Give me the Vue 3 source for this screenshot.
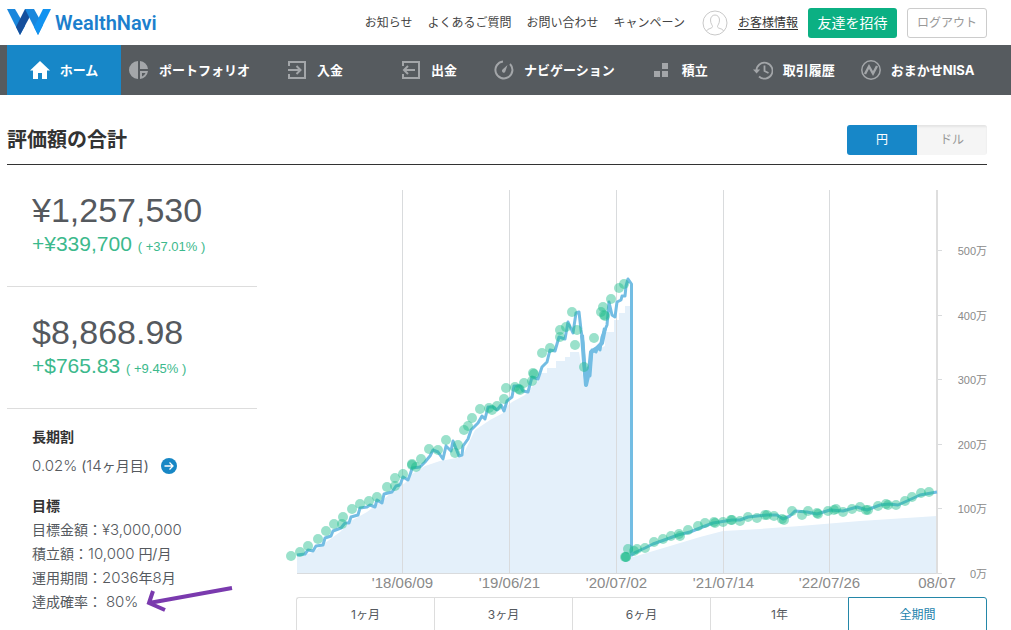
<script setup>
import { ref } from 'vue'

const links = ['お知らせ', 'よくあるご質問', 'お問い合わせ', 'キャンペーン']
const nav = [
  { id: 'home', label: 'ホーム' },
  { id: 'portfolio', label: 'ポートフォリオ' },
  { id: 'deposit', label: '入金' },
  { id: 'withdraw', label: '出金' },
  { id: 'navigation', label: 'ナビゲーション' },
  { id: 'reserve', label: '積立' },
  { id: 'history', label: '取引履歴' },
  { id: 'nisa', label: 'おまかせNISA' },
]
const currencies = ['円', 'ドル']
const currency = ref('円')
const totals = [
  { value: '¥1,257,530', gain: '+¥339,700', rate: '( +37.01% )' },
  { value: '$8,868.98', gain: '+$765.83', rate: '( +9.45% )' },
]
const periods = ['1ヶ月', '3ヶ月', '6ヶ月', '1年', '全期間']
const period = ref('全期間')

const xTicks = [
  { x: 402.5, label: "'18/06/09" },
  { x: 509.5, label: "'19/06/21" },
  { x: 616.5, label: "'20/07/02" },
  { x: 723.5, label: "'21/07/14" },
  { x: 829.5, label: "'22/07/26" },
  { x: 937, label: '08/07' },
]
const yTicks = [
  { y: 250.5, label: '500万' },
  { y: 315.5, label: '400万' },
  { y: 379.5, label: '300万' },
  { y: 444.5, label: '200万' },
  { y: 508.5, label: '100万' },
  { y: 573.5, label: '0万' },
]
const line =
  '297,555 305,554 308,550 313,551 316,546 323,545 325,538 331,536 333,531 341,528 345,523 349,523 351,517 358,515 360,508 367,507 370,505 375,507 377,500 382,503 384,494 392,492 396,486 400,485 403,477 408,480 411,472 412,468 420,467 425,462 430,456 433,450 438,452 443,459 446,446 451,451 453,441 459,456 462,455 463,446 468,439 471,430 478,423 482,416 485,419 488,407 493,407 497,410 501,405 504,411 507,401 512,397 514,386 520,386 523,391 528,392 532,377 538,379 542,367 547,362 550,350 555,351 559,337 565,339 568,322 573,333 576,313 579,312 581,330 583,343 584,362 586,385 588,368 590,376 592,350 596,352 598,347 600,350 602,337 607,325 609,302 612,315 615,317 617,302 621,300 622,296 625,296 626,286 628,279 631.5,284 631.5,555 636,552 645,548 653,544 667,539 678,535 690,532 700,528 713,523 732,520 740,520 748,517 767,515 777,515 783,519 790,516 795,511 807,512 817,514 830,510 843,511 857,507 867,510 880,505 889,504 898,505 907,501 920,495 937,492'
const area =
  '297,573 297,556 312,553 325,543 340,532 351,521 367,512 384,499 396,489 405,483 412,474 425,466 440,461 462,457 475,430 490,420 505,412 505,408 512,402 525,395 538,380 540,373 547,373 547,368 556,368 556,361 565,361 565,357 570,357 570,352 579,352 585,388 592,366 592,352 605,346 605,332 614,332 614,320 619,320 619,313 625,313 625,306 632,306 633,557 660,549 700,537 723,531 760,529 800,526 860,521 937,516 937,573'
const dip = '582,335 584,362 586,385 589,372 591,352 597,348 602,343 605,328'
const dots = [
  [291, 556], [300, 552], [308, 546], [318, 539], [326, 531], [334, 524], [343, 517], [342, 524],
  [352, 509], [360, 504], [369, 501], [377, 497], [387, 487], [395, 478], [395, 486], [403, 474],
  [412, 464], [412, 465], [416, 467], [421, 459], [429, 449], [438, 450], [446, 440], [458, 445],
  [455, 453], [464, 430], [468, 426], [472, 418], [480, 409], [489, 408], [492, 410], [497, 406],
  [504, 399], [506, 388], [515, 387], [519, 389], [520, 390], [524, 383], [533, 373], [534, 374],
  [532, 381], [542, 353], [550, 348], [560, 330], [560, 337], [566, 327], [572, 312], [577, 330],
  [575, 345], [584, 367], [594, 338], [601, 312], [604, 315], [605, 316], [603, 307], [611, 299],
  [619, 288], [624, 284], [628, 549], [626, 557], [626, 557], [625, 557], [637, 549], [634, 551],
  [645, 548], [654, 542], [663, 539], [671, 536], [679, 534], [680, 536], [688, 530], [698, 526],
  [705, 523], [714, 522], [715, 523], [723, 522], [731, 520], [732, 520], [740, 521], [748, 517],
  [757, 518], [765, 515], [767, 515], [774, 516], [782, 519], [784, 520], [792, 511], [802, 515],
  [808, 511], [817, 513], [818, 514], [828, 511], [836, 509], [834, 510], [843, 512], [852, 509],
  [860, 507], [866, 510], [868, 510], [878, 506], [886, 504], [888, 505], [896, 505], [905, 501],
  [912, 497], [921, 493], [929, 492],
]
</script>

<template>
  <div class="page">
    <header class="top">
      <a class="brand" href="#" aria-label="WealthNavi">
        <svg width="44" height="27" viewBox="0 0 44 27" aria-hidden="true">
          <path d="M0 0h8l10 17-5 9z" fill="#1a87dc" />
          <path d="M18 0h9l-14 26-4-8z" fill="#164f9c" />
          <path d="M18 0h9l9 16-5 10z" fill="#1a87dc" />
          <path d="M36 0h8L31 26l-4-8z" fill="#1293f0" />
        </svg>
        <span>WealthNavi</span>
      </a>
      <div class="links">
        <a v-for="l in links" :key="l" href="#">{{ l }}</a>
      </div>
      <a class="account" href="#">
        <svg width="26" height="26" viewBox="0 0 26 26" fill="none" stroke="#c9c9c9" aria-hidden="true">
          <circle cx="13" cy="13" r="12" />
          <path d="M4.500 21c1-3 6-2 6-4.500 0-1.500-2-2.500-2-6.500 0-3 2-5 4.500-5s4.500 2 4.500 5c0 4-2 5-2 6.500 0 2.500 5 1.500 6 4.500" />
        </svg>
        <span>お客様情報</span>
      </a>
      <button class="invite" type="button">友達を招待</button>
      <button class="logout" type="button">ログアウト</button>
    </header>

    <nav class="nav">
      <a v-for="n in nav" :key="n.id" href="#" :class="{ active: n.id === 'home' }">
        <svg width="20" height="20" viewBox="0 0 20 20" fill="none" stroke="#a3a6a9" stroke-width="2" aria-hidden="true">
          <path v-if="n.id === 'home'" d="M10 1 0 10.500h3V19h5v-6h4v6h5v-8.500h3z" fill="#fff" stroke="none" />
          <g v-else-if="n.id === 'portfolio'" stroke="none" fill="#a3a6a9">
            <path d="M9 1v18A9 9 0 0 1 9 1zM11 1a9 9 0 0 1 8 8h-8z" />
            <path d="M11 11h8a9 9 0 0 1-8 8zm2 2v3.500a6 6 0 0 0 3.500-3.500z" fill-rule="evenodd" />
          </g>
          <path v-else-if="n.id === 'deposit'" d="M2 6V2h16v16H2v-4M1 10h12M9.500 6l4 4-4 4" />
          <path v-else-if="n.id === 'withdraw'" d="M2 6V2h16v16H2v-4M14 10H3M7 6l-4 4 4 4" />
          <g v-else-if="n.id === 'navigation'">
            <path d="M9 1.500A8.500 8.500 0 1 0 16 4" />
            <path d="M13.500 5 8.500 9.500a1.800 1.800 0 1 0 3 1.500z" fill="#a3a6a9" stroke="none" />
          </g>
          <path v-else-if="n.id === 'reserve'" d="M10 3h6v6h-6zM2 11h6v6H2zM10 11h6v6h-6z" fill="#a3a6a9" stroke="none" />
          <g v-else-if="n.id === 'history'">
            <path d="M3.500 11A8 8 0 1 1 6 16.500M11.500 5.500V11l4 2" stroke-width="1.800" />
            <path d="M0 9.500h7.200L3.600 13.500z" fill="#a3a6a9" stroke="none" />
          </g>
          <g v-else>
            <circle cx="10" cy="10" r="9.200" stroke-width="1.500" />
            <path d="M4 14 8 6.500l4 7L16 6" stroke-width="2.400" />
          </g>
        </svg>
        <span>{{ n.label }}</span>
      </a>
    </nav>

    <main>
      <div class="heading">
        <h1>評価額の合計</h1>
        <div class="toggle">
          <button
            v-for="c in currencies"
            :key="c"
            type="button"
            :class="{ on: c === currency }"
            :aria-pressed="c === currency"
            @click="currency = c"
          >{{ c }}</button>
        </div>
      </div>

      <div class="content">
        <section class="summary">
          <div v-for="t in totals" :key="t.value" class="total">
            <p class="value">{{ t.value }}</p>
            <p class="gain">{{ t.gain }} <small>{{ t.rate }}</small></p>
          </div>
          <div class="details">
            <h2>長期割</h2>
            <p class="discount">
              <span><b>0.02%</b> (<b>14</b>ヶ月目)</span>
              <a href="#" aria-label="長期割の詳細">
                <svg width="16" height="16" viewBox="0 0 16 16" aria-hidden="true">
                  <circle cx="8" cy="8" r="8" fill="#1787c5" />
                  <path d="M3.500 8h8.500M8.500 4.500 12 8l-3.500 3.500" fill="none" stroke="#fff" stroke-width="1.300" />
                </svg>
              </a>
            </p>
            <h2>目標</h2>
            <p>目標金額：<b>¥3,000,000</b></p>
            <p>積立額：<b>10,000</b> 円/月</p>
            <p>運用期間：<b>2036</b>年<b>8</b>月</p>
            <p class="chance">
              <span>達成確率： <b>80%</b></span>
              <svg width="88" height="24" viewBox="146 590 88 24" fill="none" stroke="#7a3aae" stroke-width="4" aria-hidden="true">
                <path d="M232 588 149 603M153 591l-4 12 16 7" />
              </svg>
            </p>
          </div>
        </section>

        <section class="history">
          <svg class="chart" viewBox="285 180 702 417" role="img" aria-label="評価額の推移">
            <polygon :points="area" fill="#e4f0fa" />
            <g stroke="#d9dbdd">
              <line v-for="t in xTicks.slice(0, 5)" :key="t.x" :x1="t.x" :x2="t.x" y1="190" y2="573" />
              <line x1="297" x2="941" y1="573.5" y2="573.5" />
              <line v-for="t in yTicks" :key="t.y" x1="937" x2="942" :y1="t.y" :y2="t.y" />
              <line x1="937" x2="937" y1="190" y2="574" stroke="#dedede" stroke-width="2" />
            </g>
            <g fill="none" stroke="#73bde3" stroke-width="3" stroke-linejoin="round">
              <polyline :points="line" />
              <polyline :points="dip" stroke-width="4" />
            </g>
            <g fill="#20bd8b" fill-opacity="0.45">
              <circle v-for="(d, i) in dots" :key="i" :cx="d[0]" :cy="d[1]" r="5" />
            </g>
            <text v-for="t in xTicks" :key="t.label" class="date" :x="t.x" y="588">{{ t.label }}</text>
            <text v-for="t in yTicks" :key="t.label" class="amount" x="987" :y="t.y + 4">{{ t.label }}</text>
          </svg>
          <div class="periods">
            <button
              v-for="p in periods"
              :key="p"
              type="button"
              :class="{ on: p === period }"
              :aria-pressed="p === period"
              @click="period = p"
            >{{ p }}</button>
          </div>
        </section>
      </div>
    </main>
  </div>
</template>

<style>
html {
  background: #fff;
  scrollbar-width: none;
}
</style>

<style scoped>
.page {
  color: #55595e;
  font: 14px/24px "Liberation Sans", "Noto Sans CJK JP", sans-serif;
}
a {
  color: inherit;
  text-decoration: none;
}
svg {
  display: block;
  flex: none;
}
button {
  box-sizing: border-box;
  padding: 0;
  font: inherit;
  cursor: pointer;
}
h1, h2, p {
  margin: 0;
}

.top {
  display: flex;
  align-items: center;
  height: 45px;
  padding: 0 24px 0 7px;
  font-size: 12px;
}
.brand {
  display: flex;
  align-items: center;
  gap: 4px;
  margin-right: auto;
  color: #1c7fcd;
  font: 600 20px/24px Roboto, sans-serif;
}
.links {
  display: flex;
  gap: 15px;
  margin-right: 17px;
  color: #444;
}
.account {
  display: flex;
  align-items: center;
  gap: 10px;
  margin-right: 10px;
  color: #333;
}
.account span {
  text-decoration: underline;
  text-underline-offset: 2px;
}
.invite,
.logout {
  height: 30px;
  border-radius: 3px;
}
.invite {
  width: 89px;
  margin-right: 10px;
  border: 0;
  background: #0bb083;
  color: #fff;
  font-size: 14px;
}
.logout {
  width: 80px;
  border: 1px solid #ccc;
  background: #fff;
  color: #999;
}

.nav {
  display: flex;
  height: 50px;
  padding-left: 7px;
  background: #565b5f;
  color: #fff;
  font-family: "Inter", "Noto Sans CJK JP", sans-serif;
  font-size: 13px;
  font-weight: 700;
}
.nav a {
  box-sizing: border-box;
  display: flex;
  align-items: center;
  justify-content: center;
  gap: 10px;
  min-width: 114px;
  padding: 0 8px;
  white-space: nowrap;
}
.nav a:last-child {
  padding: 0 10px;
}
.nav .active {
  background: #1787c8;
}

main {
  padding: 30px 24px 0 7px;
}
.heading {
  display: flex;
  align-items: center;
  justify-content: space-between;
  padding-bottom: 9px;
  border-bottom: 1px solid #333;
}
h1 {
  color: #333;
  font-size: 20px;
  line-height: 30px;
}
.toggle {
  display: flex;
  overflow: hidden;
  border-radius: 3px;
}
.toggle button {
  width: 70px;
  height: 30px;
  border: 0;
  background: #f5f5f5;
  box-shadow: inset 0 2px 2px #e4e4e4;
  color: #999;
  font-size: 12px;
}
.toggle .on {
  background: #1787c8;
  box-shadow: none;
  color: #fff;
}

.content {
  display: flex;
  gap: 28px;
}
.summary {
  flex: none;
  width: 250px;
}
.total {
  padding: 25px 0 30px 25px;
  border-bottom: 1px solid #ddd;
}
.value {
  font-size: 34px;
  line-height: 40px;
}
.gain {
  margin-top: 2px;
  color: #3cb98c;
  font-size: 21px;
}
.gain small {
  font-size: 13px;
  line-height: 1;
}
.details {
  padding: 16px 0 0 25px;
  font-family: "Inter", "Noto Sans CJK JP", sans-serif;
}
.details b {
  font-size: 15px;
  font-weight: 300;
  line-height: 1;
}
h2 {
  color: #333;
  font-size: 14px;
  line-height: 24px;
}
.discount {
  display: flex;
  align-items: center;
  gap: 12px;
  margin: 5px 0 16px;
}
.chance {
  display: flex;
  gap: 8px;
  white-space: pre;
}
.chance svg {
  overflow: visible;
}

.history {
  flex: 1;
  min-width: 0;
  padding-top: 15px;
}
.chart {
  width: 100%;
  height: auto;
}
.chart text {
  fill: #8a8a8a;
}
.date {
  font-size: 15px;
  text-anchor: middle;
}
.amount {
  font-size: 11px;
  text-anchor: end;
}
.periods {
  display: flex;
  margin-left: 11px;
}
.periods button {
  flex: 1;
  height: 36px;
  border: 1px solid #ddd;
  border-right: 0;
  background: #fff;
  color: #55595e;
  font: 12px/24px "Inter", "Noto Sans CJK JP", sans-serif;
}
.periods button:first-child {
  border-radius: 3px 0 0 3px;
}
.periods button:last-child {
  border-right: 1px solid #ddd;
  border-radius: 0 3px 3px 0;
}
.periods .on,
.periods .on:last-child {
  border: 1px solid #2487a8;
  color: #1d83ad;
}
</style>
